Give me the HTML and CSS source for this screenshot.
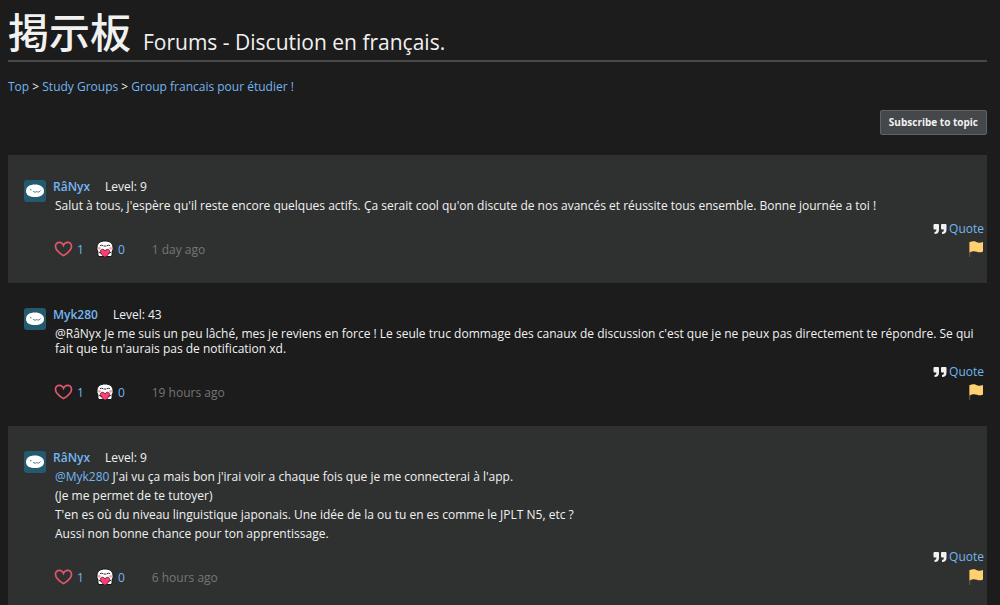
FILE: index.html
```html
<!DOCTYPE html>
<html lang="fr">
<head>
<meta charset="utf-8">
<title>Forums - Discution en français.</title>
<link rel="stylesheet" href="styles.css">
</head>
<body>
<svg class="sprites" aria-hidden="true">
  <symbol id="avatar" viewBox="0 0 22 22">
    <rect width="22" height="22" rx="3" fill="#235a70"/>
    <path d="M2 11C2 6.500 6 4.500 11 4.500s9 2.500 9 6.500-4 6-9 6-9-1.500-9-6z" fill="#fff"/>
    <path d="M6 9.500l1.500.5M9 11c1 1.500 3 1.500 3.500.5 1 1 3.500.5 4-1" fill="none" stroke="#356779" stroke-width=".9"/>
  </symbol>
  <symbol id="heart" viewBox="0 0 18 16">
    <path d="M9 14.600C5.500 12.400 1 9.300 1 5.400 1 2.800 2.900 1.300 4.900 1.300 6.700 1.300 8.200 2.300 9 4.300 9.800 2.300 11.300 1.300 13.100 1.300c2 0 3.900 1.500 3.900 4.100 0 3.900-4.500 7-8 9.200z" fill="none" stroke="#e0566e" stroke-width="1.700"/>
  </symbol>
  <symbol id="hug" viewBox="0 0 18 18">
    <path d="M2.500 16.500Q1.500 14 2 12 .5 9.500 1 7C1.500 3 4.500 1 9 1s7.500 2 8 6q.5 2.500-1 5 .5 2-.5 4.500z" fill="#fff" stroke="#151515" stroke-width="1"/>
    <path d="M4 5.700q1.500-1 3 0M11 5.700q1.500-1 3 0M7.500 6h3" fill="none" stroke="#222" stroke-width=".9"/>
    <circle cx="3.300" cy="8.300" r="1.400" fill="#f6a5ad"/><circle cx="14.700" cy="8.300" r="1.400" fill="#f6a5ad"/>
    <path d="M9 17.300C6.500 15.500 4.300 13.700 4.300 11.500 4.300 8.800 7.800 8.500 9 10.800c1.200-2.300 4.700-2 4.700.7C13.700 13.700 11.500 15.500 9 17.300z" fill="#ff3e73" stroke="#37151d" stroke-width=".7"/>
    <path d="M3 12.500q1.500-.5 2.500 1.500M15 12.500q-1.500-.5-2.500 1.500" fill="none" stroke="#222" stroke-width=".8"/>
  </symbol>
  <symbol id="quote" viewBox="0 0 14 12">
    <path d="M1.500 1H5q1 0 1 1v4.500C6 9.500 4.500 11 1.500 11V9Q3.500 9 3.500 6.500h-2Q.5 6.500.5 5.500V2q0-1 1-1zM9 1h3.500q1 0 1 1v4.500c0 3-1.500 4.500-4.500 4.500V9q2 0 2-2.500H9q-1 0-1-1V2q0-1 1-1z" fill="#f1f1f1"/>
  </symbol>
  <symbol id="flag" viewBox="0 0 16 18">
    <path d="M1.700 2v15" stroke="#6b5a3a" stroke-width="1"/>
    <path d="M1.500 2.200C5 .5 7.500 1.500 9 2.300c2 .8 4 .6 6-.3v9.500c-2 1-4 1.200-6 .3-2-.9-4.500-1-7.500.7z" fill="#ffd071"/>
  </symbol>
</svg>

<header class="page-header">
  <h1 class="title"><span class="title-ja" lang="ja">掲示板</span> <span class="title-text">Forums - Discution en français.</span></h1>
</header>
<nav class="breadcrumb"><a href="#">Top</a> &gt; <a href="#">Study Groups</a> &gt; <a href="#">Group francais pour étudier !</a></nav>
<div class="toolbar"><button class="subscribe" type="button">Subscribe to topic</button></div>

<main class="posts">
  <article class="post">
    <svg class="avatar"><use href="#avatar"/></svg>
    <div class="content">
      <div class="author"><a class="name" href="#">RâNyx</a><span>Level: 9</span></div>
      <div class="message">
        <p>Salut à tous, j'espère qu'il reste encore quelques actifs. Ça serait cool qu'on discute de nos avancés et réussite tous ensemble. Bonne journée a toi !</p>
      </div>
      <div class="quote-row"><svg class="quote-icon"><use href="#quote"/></svg><a href="#">Quote</a></div>
      <footer class="actions">
        <a class="reaction" href="#"><svg class="heart-icon"><use href="#heart"/></svg>1</a>
        <a class="reaction" href="#"><svg class="hug-icon"><use href="#hug"/></svg>0</a>
        <time class="time">1 day ago</time>
        <button class="flag" type="button" aria-label="Signaler"><svg class="flag-icon"><use href="#flag"/></svg></button>
      </footer>
    </div>
  </article>
  <article class="post">
    <svg class="avatar"><use href="#avatar"/></svg>
    <div class="content">
      <div class="author"><a class="name" href="#">Myk280</a><span>Level: 43</span></div>
      <div class="message">
        <p>@RâNyx Je me suis un peu lâché, mes je reviens en force ! Le seule truc dommage des canaux de discussion c'est que je ne peux pas directement te répondre. Se qui fait que tu n'aurais pas de notification xd.</p>
      </div>
      <div class="quote-row"><svg class="quote-icon"><use href="#quote"/></svg><a href="#">Quote</a></div>
      <footer class="actions">
        <a class="reaction" href="#"><svg class="heart-icon"><use href="#heart"/></svg>1</a>
        <a class="reaction" href="#"><svg class="hug-icon"><use href="#hug"/></svg>0</a>
        <time class="time">19 hours ago</time>
        <button class="flag" type="button" aria-label="Signaler"><svg class="flag-icon"><use href="#flag"/></svg></button>
      </footer>
    </div>
  </article>
  <article class="post">
    <svg class="avatar"><use href="#avatar"/></svg>
    <div class="content">
      <div class="author"><a class="name" href="#">RâNyx</a><span>Level: 9</span></div>
      <div class="message">
        <p><a href="#">@Myk280</a> J'ai vu ça mais bon j'irai voir a chaque fois que je me connecterai à l'app.</p>
        <p>(Je me permet de te tutoyer)</p>
        <p>T'en es où du niveau linguistique japonais. Une idée de la ou tu en es comme le JPLT N5, etc ?</p>
        <p>Aussi non bonne chance pour ton apprentissage.</p>
      </div>
      <div class="quote-row"><svg class="quote-icon"><use href="#quote"/></svg><a href="#">Quote</a></div>
      <footer class="actions">
        <a class="reaction" href="#"><svg class="heart-icon"><use href="#heart"/></svg>1</a>
        <a class="reaction" href="#"><svg class="hug-icon"><use href="#hug"/></svg>0</a>
        <time class="time">6 hours ago</time>
        <button class="flag" type="button" aria-label="Signaler"><svg class="flag-icon"><use href="#flag"/></svg></button>
      </footer>
    </div>
  </article>
</main>
</body>
</html>
```
FILE: styles.css
```css
* { box-sizing: border-box; }
html { background: #1c1c1c; }
body {
  margin: 0;
  padding: 8px 13px 0 8px;
  color: #f1f1f1;
  font: 12px/15px "Open Sans", "Noto Sans", "Noto Sans CJK JP", sans-serif;
}
a { color: #73b5f0; text-decoration: none; }
svg { display: block; flex: none; }
.sprites { display: none; }

.title {
  display: flex;
  align-items: flex-end;
  gap: 12px;
  margin: 0;
  padding-bottom: 8px;
  border-bottom: 2px solid #484848;
  font-size: 21px;
  font-weight: 400;
  line-height: 20px;
}
.title-ja {
  font-family: "Noto Sans CJK JP", sans-serif;
  font-size: 41px;
  font-weight: 500;
  line-height: 44px;
}
.breadcrumb { margin-top: 17px; }
.toolbar { display: flex; justify-content: flex-end; margin: 16px 0 20px; }
.subscribe {
  height: 25px;
  padding: 0 8px;
  border: 1px solid #606365;
  border-radius: 2px;
  background: #45484a;
  color: #f1f1f1;
  font: bold 10px/15px "Open Sans", "Noto Sans", sans-serif;
}

.post { display: flex; gap: 7px; padding: 24px 3px 24px 16px; }
.post:nth-child(odd) { background: #2f3130; }
.avatar { width: 22px; height: 22px; margin-top: 1px; }
.content { flex: 1; min-width: 0; }
.author { display: flex; gap: 15px; }
.name { font-weight: 600; }
.message { padding-left: 2px; }
.message p { margin: 4px 0; }
.quote-row {
  display: flex;
  justify-content: flex-end;
  align-items: center;
  gap: 2px;
  margin-top: 8px;
  line-height: 16px;
}
.quote-icon { width: 14px; height: 12px; }
.actions { display: flex; align-items: center; height: 20px; margin-top: 2px; padding-left: 1px; }
.reaction { display: flex; align-items: center; gap: 4px; margin-right: 12px; }
.heart-icon { width: 19px; height: 16px; }
.hug-icon { width: 18px; height: 18px; }
.time { margin-left: 15px; color: #757575; }
.flag { margin-left: auto; padding: 0; border: 0; background: none; }
.flag-icon { width: 16px; height: 18px; }
```
